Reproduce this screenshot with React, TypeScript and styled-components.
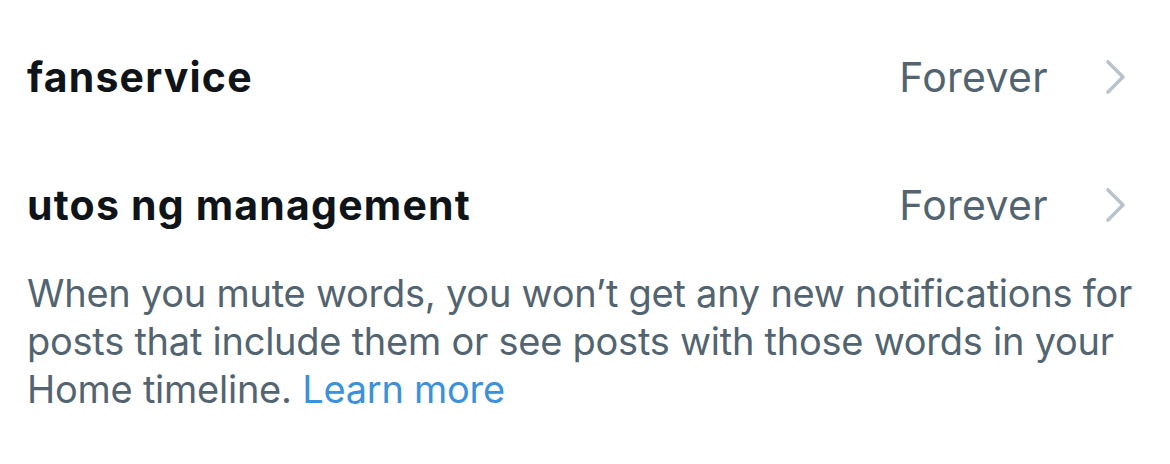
import styled, { createGlobalStyle } from "styled-components";

const GlobalStyle = createGlobalStyle`
  html, body {
    margin: 0;
    padding: 0;
    background: #fff;
  }
  body {
    font-family: Inter, "Noto Sans", "Liberation Sans", sans-serif;
    -webkit-font-smoothing: antialiased;
  }
`;

const Page = styled.div`
  width: 1170px;
  height: 464px;
  box-sizing: border-box;
  padding: 13px 43px 0 27px;
  background: #fff;
`;

const Row = styled.div`
  height: 128px;
  display: flex;
  align-items: center;
  justify-content: space-between;
`;

const Word = styled.div`
  font-size: 41px;
  font-weight: 700;
  color: #0f1419;
  letter-spacing: 1.2px;
`;

const Trailing = styled.div`
  display: flex;
  align-items: center;
  gap: 57px;
`;

const Duration = styled.span`
  font-size: 41px;
  font-weight: 400;
  color: #536471;
  letter-spacing: 0.3px;
`;

const Note = styled.p`
  margin: 0;
  margin-right: -14px;
  font-size: 38px;
  line-height: 48px;
  letter-spacing: -0.25px;
  color: #536471;
`;

const LearnMore = styled.a`
  color: #3d91d8;
  text-decoration: none;
`;

function Chevron() {
  return (
    <svg width="22" height="36" viewBox="0 0 22 36" fill="none">
      <path
        d="M3 3 L18 18 L3 33"
        stroke="#b9c3cc"
        strokeWidth="3.6"
        strokeLinecap="round"
        strokeLinejoin="round"
      />
    </svg>
  );
}

const mutedWords = ["fanservice", "utos ng management"];

export default function App() {
  return (
    <>
      <GlobalStyle />
      <Page>
        {mutedWords.map((w) => (
          <Row key={w}>
            <Word>{w}</Word>
            <Trailing>
              <Duration>Forever</Duration>
              <Chevron />
            </Trailing>
          </Row>
        ))}
        <Note>
          When you mute words, you won’t get any new notifications for posts
          that include them or see posts with those words in your Home
          timeline. <LearnMore href="#">Learn more</LearnMore>
        </Note>
      </Page>
    </>
  );
}
